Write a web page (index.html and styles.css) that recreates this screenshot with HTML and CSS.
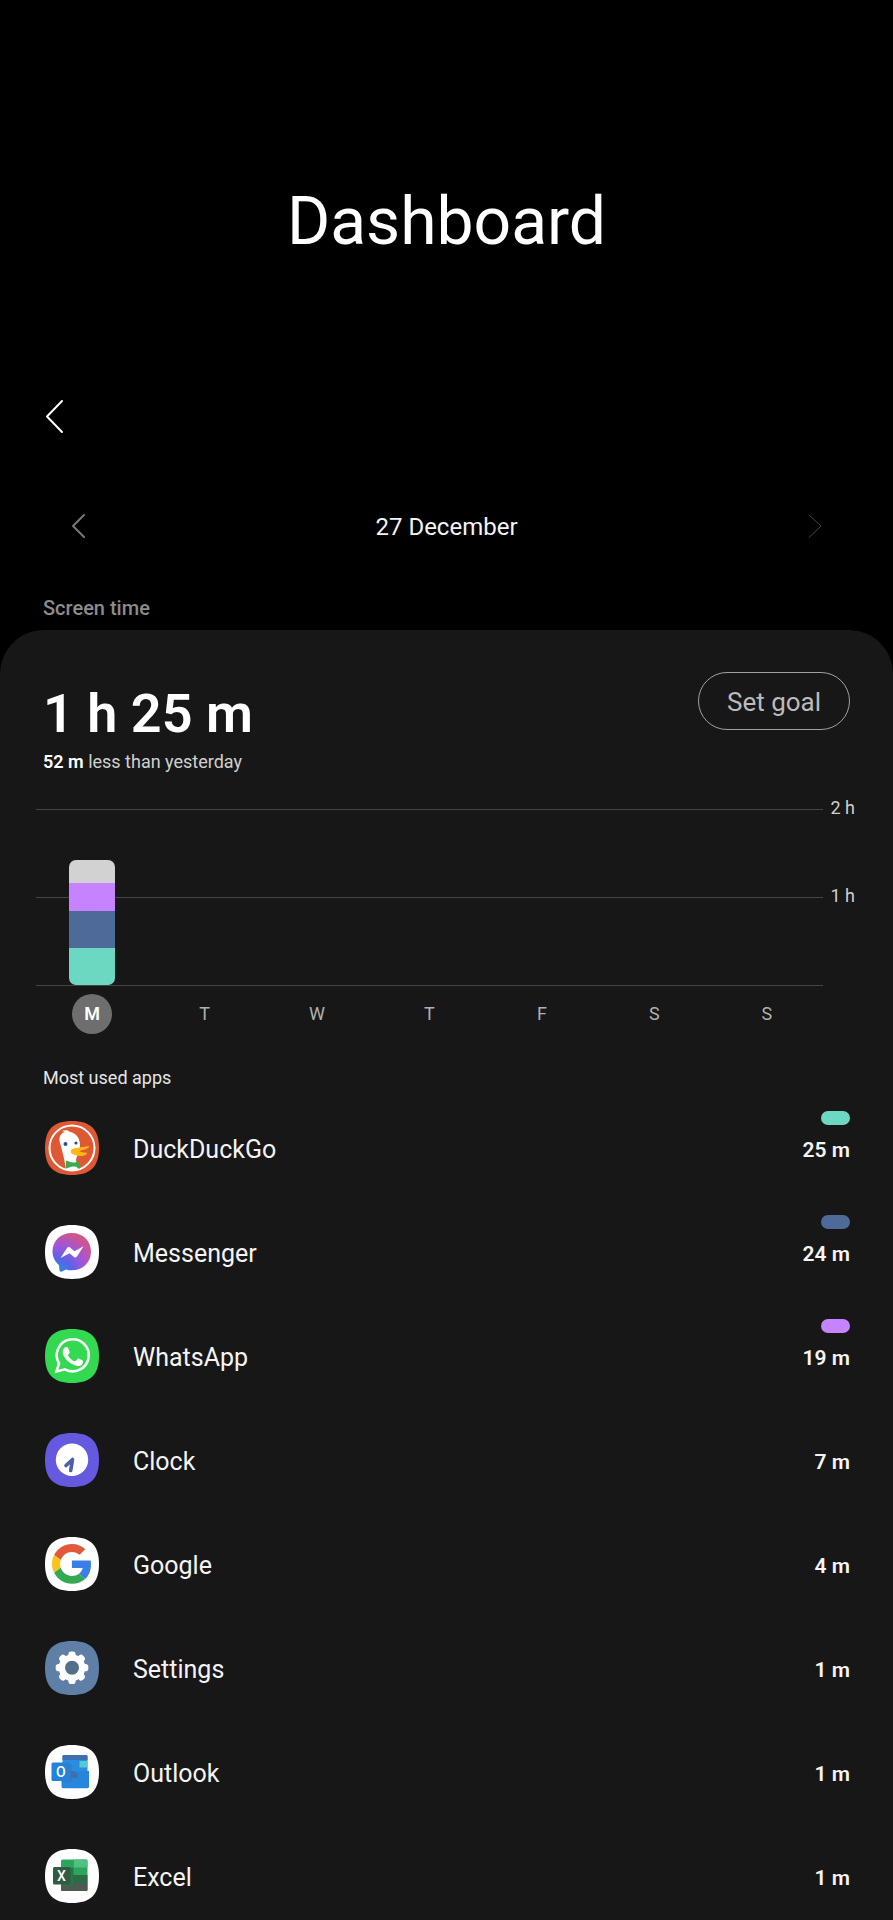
FILE: index.html
```html
<!DOCTYPE html>
<html lang="en">

<head>
     <meta charset="UTF-8">
     <meta name="viewport" content="width=device-width, initial-scale=1.0">
     <title>Dashboard</title>
     <link rel="stylesheet" href="styles.css">
</head>

<body>

     <div id="wrapper">
          <header>
               <h1>Dashboard</h1>
               <button class="back-btn" aria-label="Back">
                    <svg width="22" height="36" viewBox="0 0 22 36">
                         <path d="M19 3 4 18.500 19 34" />
                    </svg>
               </button>
          </header>

          <div class="date-nav">
               <button class="prev-btn" aria-label="Previous day">
                    <svg width="18" height="28" viewBox="0 0 18 28">
                         <path d="M14 3 3 14l11 11" />
                    </svg>
               </button>
               <span class="date">27 December</span>
               <button class="next-btn" aria-label="Next day">
                    <svg width="18" height="28" viewBox="0 0 18 28">
                         <path d="M4 3 16 14 4 25.500" />
                    </svg>
               </button>
          </div>

          <h2 class="section-title">Screen time</h2>

          <main class="panel">
               <div class="summary">
                    <div>
                         <p class="total">1 h 25 m</p>
                         <p class="compare"><b>52 m</b> less than yesterday</p>
                    </div>
                    <button class="goal-btn">Set goal</button>
               </div>

               <!-- Chart -->
               <div class="chart">
                    <div class="plot">
                         <div class="bars">
                              <div class="bar">
                                   <div class="other" style="height: 23px"></div>
                                   <div class="whatsapp" style="height: 28px"></div>
                                   <div class="messenger" style="height: 37px"></div>
                                   <div class="duckduckgo" style="height: 37px"></div>
                              </div>
                         </div>
                    </div>
                    <div class="scale">
                         <span>2 h</span>
                         <span>1 h</span>
                    </div>
                    <div class="days">
                         <span class="active-day">M</span>
                         <span>T</span>
                         <span>W</span>
                         <span>T</span>
                         <span>F</span>
                         <span>S</span>
                         <span>S</span>
                    </div>
               </div>

               <!-- App list -->
               <h3 class="list-title">Most used apps</h3>
               <ul class="apps">
                    <li>
                         <svg class="icon" viewBox="0 0 54 54">
                              <path fill="#de5833" d="M27 0c18.500 0 27 8.500 27 27s-8.500 27-27 27S0 45.500 0 27 8.500 0 27 0z" />
                              <circle cx="27" cy="27" r="22.500" fill="none" stroke="#fff" stroke-width="2" />
                              <path fill="#fff" d="M21 49c-1-9-4-20-6-27-2-6 1-10 5-11l-3-1c3-1 6-1 8 1 6 1 10 6 10 13 0 6-3 10-4 15l2 10c-4 1-8 1-12 0z" />
                              <circle cx="20.500" cy="23" r="2" fill="#2d4f8e" />
                              <circle cx="31" cy="22" r="1.600" fill="#2d4f8e" />
                              <path fill="#fdb913" d="M26 29c3-3 10-2 18-4 1 2-5 4-10 5 3 2 6 1 8 2 0 3-7 4-12 2-3-1-5-2-4-5z" />
                              <path fill="#3ca94f" d="M21 39.500l6 2h3l5-2v8l-5-2h-3l-6 2z" />
                         </svg>
                         <span class="name">DuckDuckGo</span>
                         <span class="time">25 m</span>
                         <i class="pill duckduckgo"></i>
                    </li>
                    <li>
                         <svg class="icon" viewBox="0 0 54 54">
                              <defs>
                                   <radialGradient id="bubble" cx="0.150" cy="1" r="1.150">
                                        <stop offset="0" stop-color="#1f8fe0" />
                                        <stop offset=".300" stop-color="#5b63e6" />
                                        <stop offset=".600" stop-color="#a355d8" />
                                        <stop offset="1" stop-color="#dc5672" />
                                   </radialGradient>
                              </defs>
                              <path fill="#fff" d="M27 0c18.500 0 27 8.500 27 27s-8.500 27-27 27S0 45.500 0 27 8.500 0 27 0z" />
                              <path fill="url(#bubble)" d="M26.800 8C15.500 8 7.500 16 7.500 26.500c0 5.500 2.500 10 6.500 13.500l.5 5c0 1.500 1 2 2.500 1.500l4-2c12 3.500 25-4 25-18C46 16 38 8 26.800 8z" />
                              <path fill="#fff" d="M15.500 33 22 23c1-1 2-1.200 3-.4l4.500 3.600 9-5-6.500 10.300c-1 1.200-2 1.300-3 .5l-4.500-3.700z" />
                         </svg>
                         <span class="name">Messenger</span>
                         <span class="time">24 m</span>
                         <i class="pill messenger"></i>
                    </li>
                    <li>
                         <svg class="icon" viewBox="0 0 54 54">
                              <path fill="#32d951" d="M27 0c18.500 0 27 8.500 27 27s-8.500 27-27 27S0 45.500 0 27 8.500 0 27 0z" />
                              <path fill="none" stroke="#fff" stroke-width="2.600" d="M11.500 42.500 14 34.500A16 16 0 1 1 20 40.300z" />
                              <path fill="#fff" d="M20.500 18h1.300c.6 0 1 .2 1.300 1l1.600 4c.1.600 0 1-1.900 3.200 2 3.500 4.500 5.300 7.300 6.300l2.300-2.600c.4-.5.800-.5 1.300-.3l4 2c.7.400.4 3-.8 4.200-2 1.700-4.600 1.600-7.900.3-5-2-8.500-6-10.300-9.200-1.900-3.300-1.300-6.900 1.800-8.900z" />
                         </svg>
                         <span class="name">WhatsApp</span>
                         <span class="time">19 m</span>
                         <i class="pill whatsapp"></i>
                    </li>
                    <li>
                         <svg class="icon" viewBox="0 0 54 54">
                              <path fill="#6459df" d="M27 0c18.500 0 27 8.500 27 27s-8.500 27-27 27S0 45.500 0 27 8.500 0 27 0z" />
                              <circle cx="27" cy="26.700" r="16.200" fill="#fff" />
                              <path fill="none" stroke="#4d5fa8" stroke-width="3.600" stroke-linecap="round" stroke-linejoin="round" d="M21 32.500l6.500-6-1.800 11" />
                         </svg>
                         <span class="name">Clock</span>
                         <span class="time">7 m</span>
                    </li>
                    <li>
                         <svg class="icon" viewBox="0 0 54 54">
                              <path fill="#fff" d="M27 0c18.500 0 27 8.500 27 27s-8.500 27-27 27S0 45.500 0 27 8.500 0 27 0z" />
                              <g transform="translate(7 7) scale(.83)">
                                   <path fill="#e2583a" d="M24 9.500c3.540 0 6.710 1.220 9.210 3.600l6.850-6.850C35.900 2.380 30.470 0 24 0 14.620 0 6.510 5.380 2.560 13.220l7.980 6.190C12.430 13.720 17.740 9.500 24 9.500z" />
                                   <path fill="#3a7fe6" d="M46.980 24.550c0-1.570-.15-3.090-.38-4.550H24v9.020h12.940c-.58 2.960-2.260 5.480-4.780 7.180l7.730 6c4.510-4.180 7.090-10.360 7.090-17.650z" />
                                   <path fill="#f7c31c" d="M10.530 28.590c-.48-1.450-.76-2.990-.76-4.590s.27-3.140.76-4.590l-7.980-6.190C.92 16.460 0 20.120 0 24c0 3.880.92 7.540 2.560 10.780l7.970-6.190z" />
                                   <path fill="#34a853" d="M24 48c6.480 0 11.930-2.130 15.890-5.810l-7.730-6c-2.150 1.450-4.920 2.300-8.160 2.300-6.260 0-11.570-4.220-13.470-9.910l-7.980 6.190C6.510 42.620 14.620 48 24 48z" />
                              </g>
                         </svg>
                         <span class="name">Google</span>
                         <span class="time">4 m</span>
                    </li>
                    <li>
                         <svg class="icon" viewBox="0 0 54 54">
                              <path fill="#5f7fa6" d="M27 0c18.500 0 27 8.500 27 27s-8.500 27-27 27S0 45.500 0 27 8.500 0 27 0z" />
                              <g fill="#fff" transform="translate(27 26.700)">
                                   <circle r="13.300" />
                                   <rect x="-3.600" y="-16.300" width="7.200" height="32.600" rx="2.800" />
                                   <rect x="-3.600" y="-16.300" width="7.200" height="32.600" rx="2.800" transform="rotate(45)" />
                                   <rect x="-3.600" y="-16.300" width="7.200" height="32.600" rx="2.800" transform="rotate(90)" />
                                   <rect x="-3.600" y="-16.300" width="7.200" height="32.600" rx="2.800" transform="rotate(135)" />
                                   <circle r="7" fill="#546f8c" />
                              </g>
                         </svg>
                         <span class="name">Settings</span>
                         <span class="time">1 m</span>
                    </li>
                    <li>
                         <svg class="icon" viewBox="0 0 54 54">
                              <path fill="#fff" d="M27 0c18.500 0 27 8.500 27 27s-8.500 27-27 27S0 45.500 0 27 8.500 0 27 0z" />
                              <rect x="17.500" y="10" width="25" height="25" rx="1.500" fill="#2a8de0" />
                              <path fill="#3f6fae" d="M17.500 15v-3.500c0-1 .5-1.500 1.500-1.500h22c1 0 1.500.5 1.500 1.500V15z" />
                              <path fill="#55cbd0" d="M34.500 16h8v6.500h-8z" />
                              <path fill="#2686dc" d="M16.500 27 44 26v15.500c0 1-.6 1.700-1.700 1.700H18c-1 0-1.500-.7-1.500-1.700z" />
                              <path fill="#3b78bd" d="M17 19h9.500v18H17z" />
                              <path fill="#3f6fae" d="M26 26h3l4 3v4h-7z" />
                              <rect x="6.500" y="17.500" width="18.500" height="18.500" rx="1.500" fill="#2382d9" />
                              <text class="letter" x="15.800" y="31.500">O</text>
                         </svg>
                         <span class="name">Outlook</span>
                         <span class="time">1 m</span>
                    </li>
                    <li>
                         <svg class="icon" viewBox="0 0 54 54">
                              <path fill="#fff" d="M27 0c18.500 0 27 8.500 27 27s-8.500 27-27 27S0 45.500 0 27 8.500 0 27 0z" />
                              <rect x="16" y="10.500" width="26.500" height="31.500" rx="1.500" fill="#2fa45d" />
                              <path fill="#4fc07f" d="M29 10.500h12c1 0 1.500.5 1.500 1.500v6.500H29z" />
                              <path fill="#2b6b45" d="M16 26h26.500v8H16z" />
                              <path fill="#4c5a50" d="M16 34h26.500v6.500c0 1-.5 1.500-1.500 1.500H17.500c-1 0-1.500-.5-1.500-1.500z" />
                              <path fill="#23784a" d="M16 18.500h10.500c1.500 0 2 .5 2 1.500v15c0 1-.5 1.500-1.500 1.500H16z" />
                              <rect x="8" y="18" width="17.500" height="17.500" rx="1.500" fill="#315c43" />
                              <text class="letter" x="16.500" y="31.500">X</text>
                         </svg>
                         <span class="name">Excel</span>
                         <span class="time">1 m</span>
                    </li>
               </ul>
          </main>
     </div>

</body>

</html>
```
FILE: styles.css
```css
* {
     padding: 0;
     margin: 0;
     box-sizing: border-box;
     font-family: Roboto, 'Noto Sans', sans-serif;
}

body {
     background: #000;
     color: #f4f4f4;
}

button {
     background: none;
     border: none;
     cursor: pointer;
}

button svg {
     display: block;
     fill: none;
     stroke: currentColor;
     stroke-linecap: round;
     stroke-linejoin: round;
}

#wrapper {
     min-height: 100vh;
     display: flex;
     flex-direction: column;
}

header {
     padding: 182px 43px 0;
}

header h1 {
     font-size: 66px;
     line-height: 80px;
     font-weight: 400;
     text-align: center;
     color: #fff;
}

.back-btn {
     display: flex;
     align-items: center;
     height: 40px;
     margin-top: 134px;
     color: #fff;
     stroke-width: 2px;
}

.date-nav {
     display: flex;
     align-items: center;
     justify-content: space-between;
     height: 40px;
     margin-top: 70px;
     padding: 0 70px;
}

.date {
     padding-top: 2px;
     font-size: 24px;
     line-height: 30px;
}

.prev-btn {
     color: #777;
     stroke-width: 2px;
}

.next-btn {
     color: #444;
     stroke-width: 1px;
}

.section-title {
     margin: 50px 43px 10px;
     font-size: 20px;
     line-height: 24px;
     font-weight: 500;
     color: #8c8c8c;
}

.panel {
     flex: 1;
     padding: 42px 43px 16px;
     background: #171717;
     border-radius: 44px 44px 0 0;
}

.summary {
     display: flex;
     align-items: flex-start;
     justify-content: space-between;
}

.total {
     margin-top: 10px;
     font-size: 54px;
     line-height: 64px;
     font-weight: 600;
     color: #fff;
}

.compare {
     margin-top: 4px;
     font-size: 18px;
     line-height: 24px;
     color: #d0d0d0;
}

.compare b {
     font-weight: 600;
     color: #fff;
}

.goal-btn {
     width: 152px;
     height: 58px;
     padding-top: 2px;
     border: 1px solid #a0a0a0;
     border-radius: 29px;
     font-size: 26px;
     color: #bbb;
}

/* chart */
.chart {
     display: grid;
     grid-template-columns: 1fr 32px;
     margin: 35px -5px 0 -7px;
}

.plot {
     height: 177px;
     border-top: 1px solid #444;
     border-bottom: 1px solid #444;
     background: linear-gradient(#444, #444) 0 87px / 100% 1px no-repeat;
}

.bars {
     display: grid;
     grid-template-columns: repeat(7, 1fr);
     align-items: end;
     height: 100%;
}

.bar {
     width: 46px;
     margin: 0 auto;
     border-radius: 7px;
     overflow: hidden;
}

.other {
     background: #d2d2d2;
}

.whatsapp {
     background: #c583ff;
}

.messenger {
     background: #4d6a99;
}

.duckduckgo {
     background: #6cd8c1;
}

.scale {
     display: flex;
     flex-direction: column;
     gap: 64px;
     margin-top: -13px;
     text-align: right;
     font-size: 18px;
     line-height: 24px;
     color: #d0d0d0;
}

.days {
     display: grid;
     grid-template-columns: repeat(7, 1fr);
     justify-items: center;
     margin-top: 8px;
     font-size: 18px;
     line-height: 40px;
     color: #b0b0b0;
}

.active-day {
     width: 40px;
     border-radius: 50%;
     text-align: center;
     font-weight: 600;
     background: #6e6e6e;
     color: #fff;
}

/* app list */
.list-title {
     margin-top: 32px;
     font-size: 18px;
     line-height: 24px;
     font-weight: 400;
     color: #e6e6e6;
}

.apps {
     display: flex;
     flex-direction: column;
     gap: 50px;
     margin-top: 31px;
     list-style: none;
}

.apps li {
     position: relative;
     display: flex;
     align-items: center;
     height: 54px;
}

.icon {
     width: 54px;
     height: 54px;
     margin-left: 2px;
}

.letter {
     font-size: 14px;
     font-weight: 500;
     text-anchor: middle;
     fill: #fff;
}

.name {
     flex: 1;
     margin-left: 34px;
     padding-top: 4px;
     font-size: 25px;
     line-height: 32px;
}

.time {
     padding-top: 4px;
     font-size: 21px;
     line-height: 32px;
     font-weight: 600;
}

.pill {
     position: absolute;
     top: -10px;
     right: 0;
     width: 29px;
     height: 14px;
     border-radius: 7px;
}
```
